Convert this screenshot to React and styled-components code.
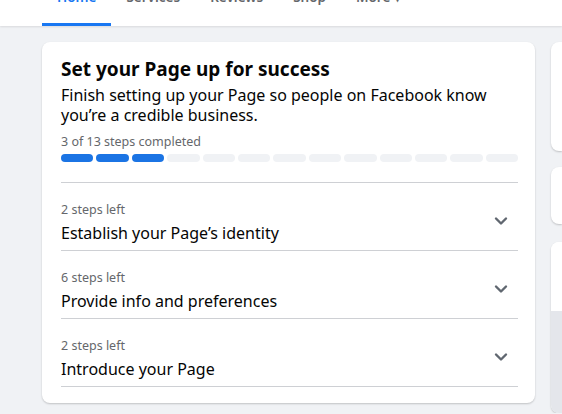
import React from 'react'
import styled, { createGlobalStyle } from 'styled-components'

const GlobalStyle = createGlobalStyle`
  html, body {
    margin: 0;
    padding: 0;
    background: #f0f2f5;
    font-family: "Segoe UI", "Noto Sans", "Open Sans", Arial, sans-serif;
    color: #050505;
    overflow: hidden;
  }
`

const Header = styled.div`
  background: #fff;
  height: 60px;
  margin-top: -34px;
  box-shadow: 0 1px 2px rgba(0, 0, 0, 0.1);
  display: flex;
  padding-left: 42px;
`

const Tab = styled.div`
  height: 60px;
  box-sizing: border-box;
  padding: 5px 15px 0;
  display: flex;
  align-items: center;
  font-size: 13.5px;
  font-weight: 600;
  color: ${(p) => (p.active ? '#1877f2' : '#65676b')};
  border-bottom: 3px solid ${(p) => (p.active ? '#1877f2' : 'transparent')};
  min-width: ${(p) => (p.active ? '67px' : 'auto')};
  justify-content: center;
`

const Content = styled.div`
  display: flex;
  align-items: flex-start;
  gap: 16px;
  padding: 16px 0 0 42px;
`

const MainCard = styled.div`
  width: 493px;
  flex-shrink: 0;
  background: #fff;
  border-radius: 8px;
  box-shadow: 0 1px 2px rgba(0, 0, 0, 0.2);
  padding: 15px 17px 16px 19px;
  box-sizing: border-box;
`

const Title = styled.h2`
  margin: 0;
  font-size: 19px;
  font-weight: 700;
  line-height: 24px;
`

const Description = styled.p`
  margin: 4px 0 0;
  font-size: 16px;
  line-height: 20px;
  color: #050505;
`

const ProgressLabel = styled.div`
  margin-top: 9px;
  font-size: 12.5px;
  line-height: 16px;
  color: #65676b;
`

const Segments = styled.div`
  display: flex;
  gap: 3px;
  margin-top: 4px;
`

const Segment = styled.div`
  flex: 1;
  height: 8px;
  border-radius: 4px;
  background: ${(p) => (p.done ? '#1b74e4' : '#f0f2f5')};
`

const StepList = styled.div`
  margin-top: 20px;
  border-top: 1px solid #ced0d4;
`

const StepRow = styled.div`
  height: 68px;
  box-sizing: border-box;
  border-bottom: 1px solid #ced0d4;
  display: flex;
  justify-content: space-between;
  padding-top: 19px;
`

const StepText = styled.div`
  display: flex;
  flex-direction: column;
`

const StepsLeft = styled.span`
  font-size: 12.5px;
  line-height: 16px;
  color: #65676b;
  margin-bottom: 5px;
`

const StepTitle = styled.span`
  font-size: 16px;
  line-height: 20px;
  color: #050505;
`

const Chevron = styled.svg`
  width: 16px;
  height: 16px;
  margin: 11px 9px 0 0;
`

const SideColumn = styled.div`
  display: flex;
  flex-direction: column;
  flex: 1;
`

const SideCard = styled.div`
  background: #fff;
  border-radius: 8px 0 0 8px;
  box-shadow: 0 1px 2px rgba(0, 0, 0, 0.2);
  height: ${(p) => p.h}px;
  margin-bottom: ${(p) => p.gap || 0}px;
  overflow: hidden;
  display: flex;
  flex-direction: column;
`

const CardTop = styled.div`
  height: 69px;
  background: #fff;
`

const Cover = styled.div`
  flex: 1;
  background: #e4e6eb;
`

const steps = [
  { left: '2 steps left', title: 'Establish your Page’s identity' },
  { left: '6 steps left', title: 'Provide info and preferences' },
  { left: '2 steps left', title: 'Introduce your Page' },
]

const ChevronIcon = () => (
  <Chevron viewBox="0 0 16 16">
    <path
      d="M3 5.5 L8 10.5 L13 5.5"
      fill="none"
      stroke="#606770"
      strokeWidth="2.4"
      strokeLinecap="round"
      strokeLinejoin="round"
    />
  </Chevron>
)

export default function App() {
  return (
    <>
      <GlobalStyle />
      <Header>
        <Tab active>Home</Tab>
        <Tab>Services</Tab>
        <Tab>Reviews</Tab>
        <Tab>Shop</Tab>
        <Tab>More ▾</Tab>
      </Header>
      <Content>
        <MainCard>
          <Title>Set your Page up for success</Title>
          <Description>
            Finish setting up your Page so people on Facebook know you’re a credible business.
          </Description>
          <ProgressLabel>3 of 13 steps completed</ProgressLabel>
          <Segments>
            {Array.from({ length: 13 }).map((_, i) => (
              <Segment key={i} done={i < 3} />
            ))}
          </Segments>
          <StepList>
            {steps.map((s, i) => (
              <StepRow key={i}>
                <StepText>
                  <StepsLeft>{s.left}</StepsLeft>
                  <StepTitle>{s.title}</StepTitle>
                </StepText>
                <ChevronIcon />
              </StepRow>
            ))}
          </StepList>
        </MainCard>
        <SideColumn>
          <SideCard h={109} gap={16} />
          <SideCard h={57} gap={18} />
          <SideCard h={171}>
            <CardTop />
            <Cover />
          </SideCard>
        </SideColumn>
      </Content>
    </>
  )
}
